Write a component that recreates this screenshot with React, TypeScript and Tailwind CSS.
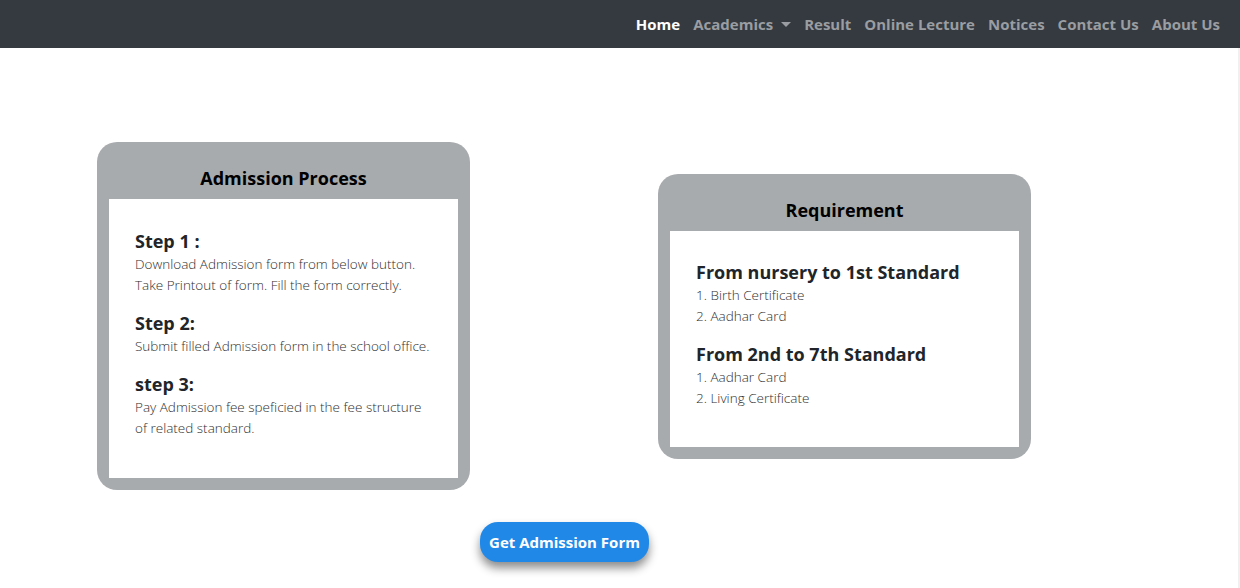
import React from "react";

const font = { fontFamily: '"Open Sans", "Noto Sans", sans-serif' };

function NavItem({ label, active, caret }: { label: string; active?: boolean; caret?: boolean }) {
  return (
    <a
      className={
        "flex items-center px-[6px] text-[15px] font-bold leading-[24px] " +
        (active ? "text-white" : "text-[#9a9da1]")
      }
    >
      {label}
      {caret && (
        <span className="ml-[8px] inline-block h-0 w-0 border-x-[5px] border-t-[5px] border-x-transparent border-t-[#9a9da1]" />
      )}
    </a>
  );
}

function Card({
  title,
  children,
  bodyClass,
}: {
  title: string;
  children: React.ReactNode;
  bodyClass: string;
}) {
  return (
    <div className="w-[373px] shrink-0 rounded-[20px] bg-[#a8abae] px-[12px] pb-[12px]">
      <div className="flex h-[57px] items-start justify-center pt-[24px]">
        <h2 className="text-[18px] font-bold leading-[24px] text-black">{title}</h2>
      </div>
      <div className={"bg-white px-[26px] " + bodyClass}>{children}</div>
    </div>
  );
}

function Section({ heading, lines, last }: { heading: string; lines: string[]; last?: boolean }) {
  return (
    <div className={last ? "" : "mb-[14px]"}>
      <h3 className="text-[18px] font-bold leading-[26px] text-[#212529]">{heading}</h3>
      {lines.map((l, i) => (
        <p key={i} className="text-[13.5px] font-light leading-[21px] text-[#2f2f2f]">
          {l}
        </p>
      ))}
    </div>
  );
}

export default function App() {
  return (
    <div style={font} className="min-h-[588px] w-full bg-white">
      <nav className="flex h-[48px] items-center justify-end bg-[#343a40] pr-[14px]">
        <div className="flex items-center gap-[1px]">
          <NavItem label="Home" active />
          <NavItem label="Academics" caret />
          <NavItem label="Result" />
          <NavItem label="Online Lecture" />
          <NavItem label="Notices" />
          <NavItem label="Contact Us" />
          <NavItem label="About Us" />
        </div>
      </nav>
      <main className="border-r-2 border-[#f0f0f0]">
        <div className="flex items-center gap-[188px] pl-[97px] pt-[94px]">
          <Card title="Admission Process" bodyClass="pt-[29px] pb-[39px]">
            <Section
              heading="Step 1 :"
              lines={["Download Admission form from below button.", "Take Printout of form. Fill the form correctly."]}
            />
            <Section heading="Step 2:" lines={["Submit filled Admission form in the school office."]} />
            <Section
              heading="step 3:"
              lines={["Pay Admission fee speficied in the fee structure", "of related standard."]}
              last
            />
          </Card>
          <Card title="Requirement" bodyClass="pt-[28px] pb-[38px]">
            <Section heading="From nursery to 1st Standard" lines={["1. Birth Certificate", "2. Aadhar Card"]} />
            <Section
              heading="From 2nd to 7th Standard"
              lines={["1. Aadhar Card", "2. Living Certificate"]}
              last
            />
          </Card>
        </div>
        <div className="pl-[480px] pt-[32px] pb-[26px]">
          <button className="h-[40px] w-[169px] rounded-[18px] bg-[#2089e8] text-[15px] font-bold text-white shadow-[0_6px_10px_rgba(0,0,0,0.45)]">
            Get Admission Form
          </button>
        </div>
      </main>
    </div>
  );
}
